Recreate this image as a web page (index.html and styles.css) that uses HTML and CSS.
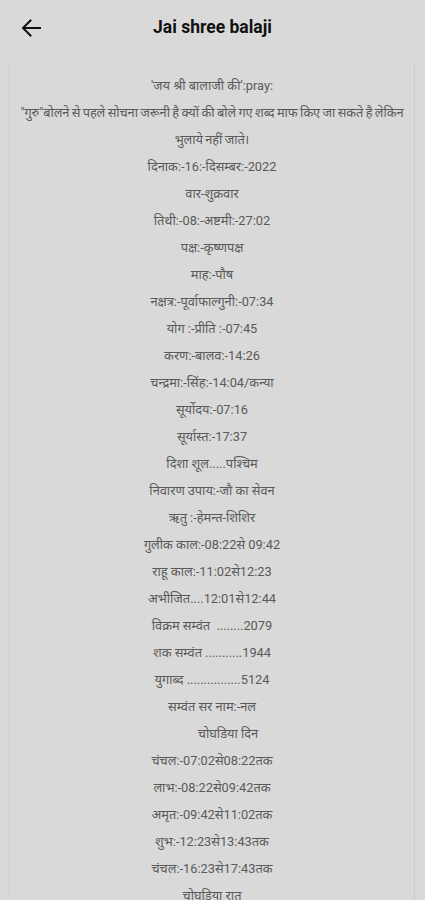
FILE: index.html
```html
<!DOCTYPE html>
<html>

<head lang="hi">
    <meta charset="UTF-8">
    <title>Jai shree balaji</title>
    <link rel="stylesheet" href="styles.css">
</head>

<body>
    <div class="top_bar">
        <a class="back" href="javascript:">
            <svg width="20" height="18" viewBox="0 0 20 18">
                <path d="M19 9H2.5M9.5 1.5L2 9l7.5 7.5" fill="none" stroke="#111" stroke-width="2" stroke-linecap="square"/>
            </svg>
        </a>
        <h1 class="title">Jai shree balaji</h1>
    </div>

    <div class="post">
        <p>'जय श्री बालाजी की':pray:</p>
        <p class="quote">"गुरु"बोलने से पहले सोचना जरूनी है क्यों की बोले गए शब्द माफ किए जा सकते है लेकिन भुलाये नहीं जाते।</p>
        <p>दिनाक:-16:-दिसम्बर:-2022</p>
        <p>वार-शुक्रवार</p>
        <p>तिथी:-08:-अष्टमी:-27:02</p>
        <p>पक्ष:-कृष्णपक्ष</p>
        <p>माह:-पौष</p>
        <p>नक्षत्र:-पूर्वाफाल्गुनी:-07:34</p>
        <p>योग :-प्रीति :-07:45</p>
        <p>करण:-बालव:-14:26</p>
        <p>चन्द्रमा:-सिंह:-14:04/कन्या</p>
        <p>सूर्योदय:-07:16</p>
        <p>सूर्यास्त:-17:37</p>
        <p>दिशा शूल.....पश्चिम</p>
        <p>निवारण उपाय:-जौ का सेवन</p>
        <p>ऋतु :-हेमन्त-शिशिर</p>
        <p>गुलीक काल:-08:22से 09:42</p>
        <p>राहू काल:-11:02से12:23</p>
        <p>अभीजित....12:01से12:44</p>
        <p>विक्रम सम्वंत &nbsp;........2079</p>
        <p>शक सम्वंत ...........1944</p>
        <p>युगाब्द ................5124</p>
        <p>सम्वंत सर नाम:-नल</p>
        <p class="shift">चोघडिया दिन</p>
        <p>चंचल:-07:02से08:22तक</p>
        <p>लाभ:-08:22से09:42तक</p>
        <p>अमृत:-09:42से11:02तक</p>
        <p>शुभ:-12:23से13:43तक</p>
        <p>चंचल:-16:23से17:43तक</p>
        <p>चोघडिया रात</p>
    </div>
</body>

</html>
```

FILE: styles.css
```css
* {
    margin: 0;
    padding: 0;
}

body {
    background-color: #d9d9d9;
    font-family: Roboto, "Noto Sans", sans-serif;
}

.top_bar {
    height: 55px;
    display: flex;
    align-items: center;
    position: relative;
}

.back {
    display: block;
    width: 20px;
    height: 18px;
    margin-left: 21px;
}

.back svg {
    display: block;
}

.title {
    position: absolute;
    left: 0;
    right: 0;
    top: 17px;
    text-align: center;
    font-size: 17.5px;
    font-weight: bold;
    color: #111;
    line-height: 20px;
    pointer-events: none;
}

.post {
    margin: 8px 10px 0 9px;
    padding: 9px 4px 0;
    border-left: 1px solid #cfcfcf;
    border-right: 1px solid #cbcbcb;
    text-align: center;
    font-size: 12.8px;
    line-height: 27px;
    color: #5a5a5a;
}

.quote {
    letter-spacing: -0.1px;
    word-spacing: -0.6px;
}

.shift {
    padding-left: 32px;
}
```
